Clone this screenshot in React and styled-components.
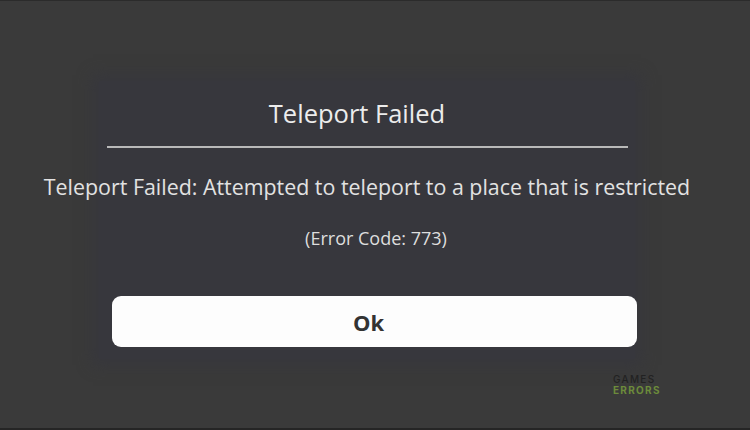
import React from 'react';
import styled, {createGlobalStyle} from "styled-components";

const GlobalStyle = createGlobalStyle`
  html, body {
    margin: 0;
    padding: 0;
    background: #3a3a3a;
  }
  #root {
    width: 750px;
    height: 430px;
  }
`

const App = () => {
    return (
        <>
            <GlobalStyle/>
            <Screen>
                <Dialog>
                    <Title>Teleport Failed</Title>
                    <Divider/>
                    <Message>Teleport Failed: Attempted to teleport to a place that is restricted</Message>
                    <Code>(Error Code: 773)</Code>
                    <OkButton>Ok</OkButton>
                </Dialog>
                <Watermark>
                    <span>GAMES</span>
                    <span className="green">ERRORS</span>
                </Watermark>
            </Screen>
        </>
    );
};

const Screen = styled.div`
  position: relative;
  box-sizing: border-box;
  width: 750px;
  height: 430px;
  background: #3a3a3a;
  border-top: 1px solid #2b2b2b;
  border-bottom: 2px solid #252525;
  display: flex;
  flex-direction: column;
  align-items: center;
  padding: 80px 16px 0 0;
  font-family: "Open Sans", "Noto Sans", sans-serif;
  overflow: hidden;
`

const Dialog = styled.div`
  width: 536px;
  box-sizing: border-box;
  display: flex;
  flex-direction: column;
  align-items: center;
  padding: 16px 8px 12px;
  background: #37373d;
  box-shadow: 0 0 14px 6px #37373d;
`

const Title = styled.h1`
  margin: 0 20px 0 0;
  font-size: 25.5px;
  line-height: 32px;
  font-weight: 400;
  color: #ececec;
`

const Divider = styled.div`
  width: 521px;
  height: 2px;
  margin-top: 17px;
  background: #b9b9b9;
`

const Message = styled.p`
  margin: 24px 0 0;
  white-space: nowrap;
  font-size: 21.4px;
  line-height: 30px;
  color: #e2e2e2;
`

const Code = styled.p`
  margin: 22px 0 0 18px;
  font-size: 18px;
  line-height: 28px;
  color: #dedede;
`

const OkButton = styled.button`
  margin: 44px 0 0 15px;
  padding: 0 12px 0 0;
  width: 525px;
  height: 51px;
  border: none;
  border-radius: 9px;
  background: #fdfdfd;
  font-family: "Open Sans", "Noto Sans", sans-serif;
  font-weight: 700;
  font-size: 22px;
  color: #333333;
  cursor: pointer;
`

const Watermark = styled.div`
  position: absolute;
  left: 613px;
  top: 373px;
  display: flex;
  flex-direction: column;
  font-family: "Inter", "Liberation Sans", sans-serif;
  font-size: 10px;
  line-height: 11px;
  font-weight: 500;
  letter-spacing: 1.3px;
  color: #222222;
  .green{
    color: #6c8b3b;
    font-weight: 700;
  }
`

export default App;
